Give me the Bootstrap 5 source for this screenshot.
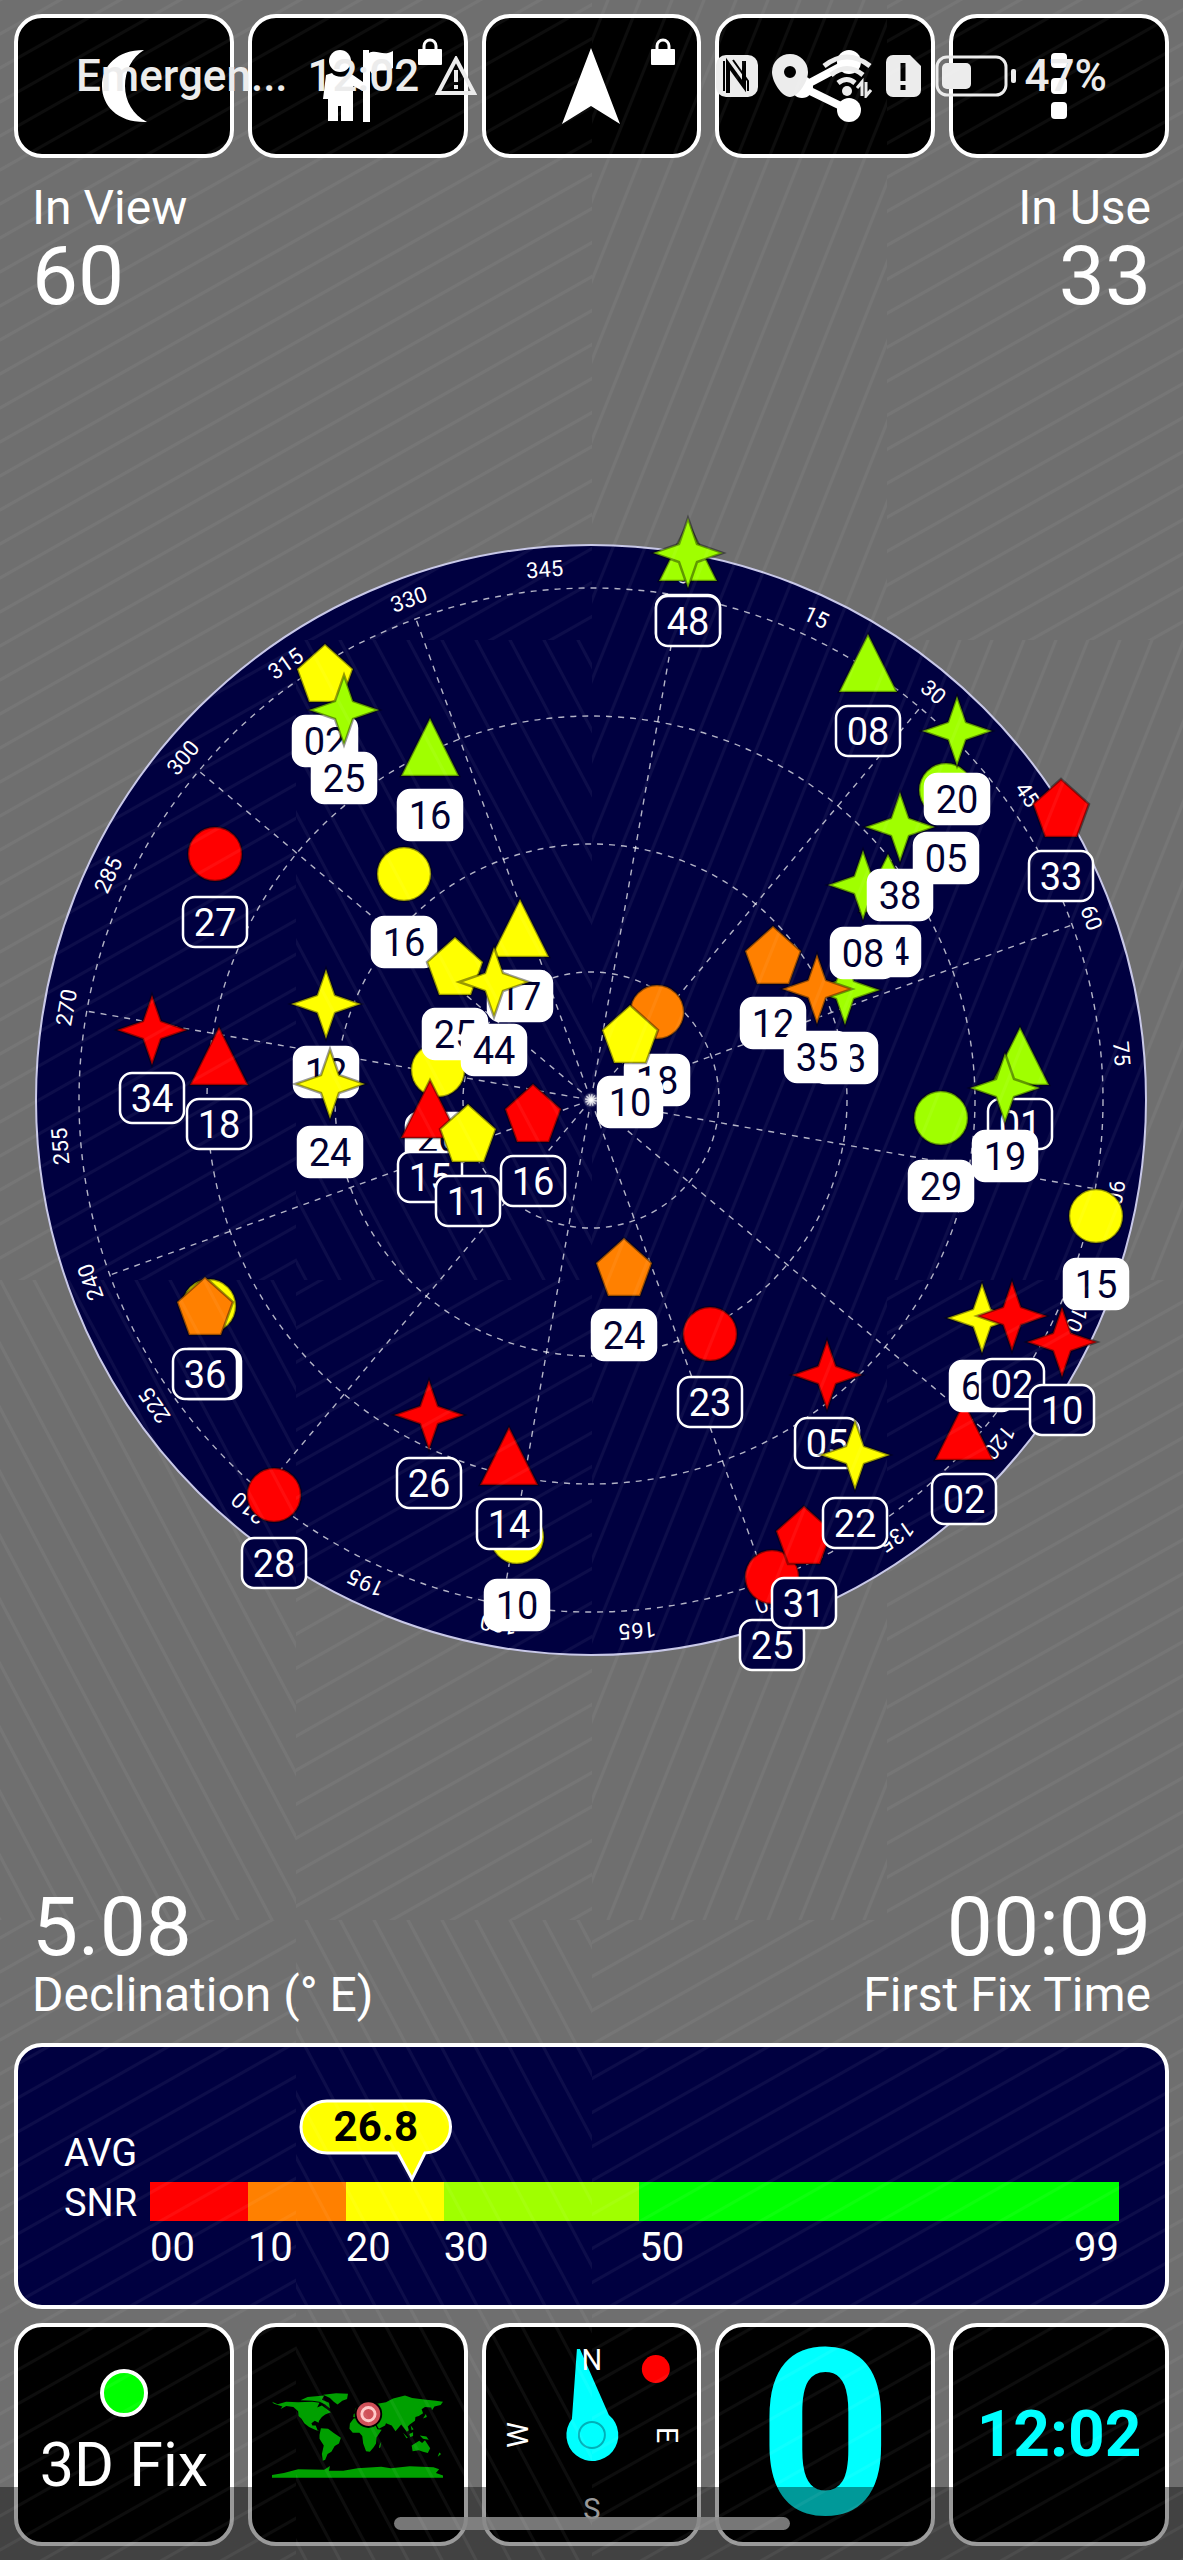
<!DOCTYPE html>
<html lang="en">
<head>
<meta charset="utf-8">
<meta name="viewport" content="width=device-width, initial-scale=1">
<title>GPS satellites</title>
<link href="https://cdn.jsdelivr.net/npm/bootstrap@5.3.0/dist/css/bootstrap.min.css" rel="stylesheet">
<style>
  body { background: #6f6f6f; color: #fff; font-family: Roboto, "Liberation Sans", sans-serif; }
  .screen { padding: 14px 0; overflow: hidden; }
  .tile-row { display: grid; grid-template-columns: repeat(5, minmax(0, 1fr)); gap: 14px; padding: 0 14px; }
  .tile { background: #000; border: 4px solid #fff; border-radius: 28px; color: #fff; padding: 0; position: relative; overflow: hidden; }
  .tile-top { height: 144px; }
  .tile-bottom { height: 223px; }
  .tile svg { display: block; }
  .tile .lock { position: absolute; top: 20px; right: 22px; }
  .status-bar { top: 50px; padding: 0 76px; color: #ececec; font-size: 44px; line-height: 52px; font-weight: 500; pointer-events: none; }
  .status-group { gap: 14px; }
  .status-clock { margin-left: 20px; }
  .readouts { padding: 0 32px; }
  .readouts-top { padding-top: 22px; }
  .readout-name { font-size: 48px; line-height: 56px; }
  .readout-value { font-size: 82px; line-height: 80px; }
  .radar { display: block; width: 100%; height: auto; }
  .radar text { font-size: 38px; text-anchor: middle; }
  .radar .bearing { font-size: 22px; fill: #fff; }
  .grid-line { fill: none; stroke: #fff; stroke-opacity: .7; stroke-width: 1.4; stroke-dasharray: 6 6; }
  .marker { stroke: #000; stroke-opacity: .4; stroke-width: 2.5; }
  .tag { stroke: #fff; stroke-width: 2.5; }
  .snr { margin: 20px 14px 14px; padding: 52px 46px 30px; background: #000040; border: 4px solid #fff; border-radius: 28px; }
  .snr-name { width: 86px; padding-top: 29px; font-size: 38px; line-height: 50px; }
  .snr-gauge { padding-top: 83px; }
  .snr-bar { height: 39px; }
  .snr-scale { font-size: 40px; line-height: 54px; }
  .span-10 { flex: 10 1 0; } .span-20 { flex: 20 1 0; } .span-49 { flex: 49 1 0; }
  .c-red { background: #f00; } .c-orange { background: #ff8000; } .c-yellow { background: #ff0; }
  .c-lime { background: #a0ff00; } .c-green { background: #0f0; }
  .bubble { top: 0; width: 153px; height: 83px; margin-left: -113px; color: #000; font-size: 42px; line-height: 56px; font-weight: 700; }
  .bubble svg { left: 0; top: 0; }
  .fix-dot { width: 48px; height: 48px; background: #0f0; border: 4px solid #fff; }
  .fix-text { font-size: 61px; line-height: 64px; }
  .speed { color: #0ff; font-size: 232px; line-height: 200px; font-weight: 700; }
  .clock { color: #0ff; font-size: 64px; line-height: 1; font-weight: 700; }
  .nav-shade { height: 73px; background: rgba(0,0,0,.4); }
  .nav-handle { width: 396px; height: 13px; border-radius: 7px; background: rgba(136,136,136,.88); }
  .texture { inset: 0; pointer-events: none; }
  .texture pattern path { fill: none; stroke: #fff; stroke-opacity: .05; stroke-width: 3; }
</style>
<script src="https://cdn.jsdelivr.net/npm/bootstrap@5.3.0/dist/js/bootstrap.bundle.min.js"></script>
</head>
<body>
<div class="screen position-relative">

  <header class="tile-row">
    <button type="button" class="tile tile-top d-flex align-items-center justify-content-center" aria-label="Night mode">
      <svg width="46" height="74" viewBox="0 0 46 74" fill="#fff"><path d="M43 1C16 1 1 17 1 37s16 37 45 36C32 66 24 52 24 37S31 8 43 1Z"/></svg>
    </button>
    <button type="button" class="tile tile-top d-flex align-items-center justify-content-center" aria-label="Waypoints">
      <svg width="70" height="74" viewBox="0 0 70 74" fill="#fff"><circle cx="17" cy="12" r="11"/><path d="M3 26l6-2c3 5 15 5 18 0l13 9v-32h6v3c8-4 14 4 24-2v17c-6 5-14 0-18 5-2 2-4 0-5-2v51h-7V42l-10-5v35H18V57h-3v15H5V50H0Z"/></svg>
      <svg class="lock" width="24" height="28" viewBox="0 0 24 28"><path d="M6 12V8a6 6 0 0 1 12 0v4" fill="none" stroke="#fff" stroke-width="3"/><rect y="11" width="24" height="16" rx="1" fill="#fff"/></svg>
    </button>
    <button type="button" class="tile tile-top d-flex align-items-center justify-content-center" aria-label="Navigate">
      <svg width="58" height="76" viewBox="0 0 58 76" fill="#fff"><path d="M29 0L58 76L29 58L0 76Z"/></svg>
      <svg class="lock" width="24" height="28" viewBox="0 0 24 28"><path d="M6 12V8a6 6 0 0 1 12 0v4" fill="none" stroke="#fff" stroke-width="3"/><rect y="11" width="24" height="16" rx="1" fill="#fff"/></svg>
    </button>
    <button type="button" class="tile tile-top d-flex align-items-center justify-content-center" aria-label="Share">
      <svg width="72" height="72" viewBox="0 0 72 72" fill="#fff"><path d="M60 12L13 37L60 60" fill="none" stroke="#fff" stroke-width="8"/><circle cx="60" cy="12" r="12"/><circle cx="60" cy="60" r="12"/><circle cx="13" cy="37" r="11"/></svg>
    </button>
    <button type="button" class="tile tile-top d-flex align-items-center justify-content-center" aria-label="More">
      <svg width="16" height="66" viewBox="0 0 16 66" fill="#fff"><rect width="16" height="15" rx="4"/><rect y="25" width="16" height="16" rx="4"/><rect y="49" width="16" height="17" rx="4"/></svg>
    </button>
  </header>

  <div class="status-bar position-absolute start-0 end-0 d-flex justify-content-between align-items-center">
    <div class="d-flex align-items-center">
      <span>Emergen...</span>
      <span class="status-clock">12:02</span>
      <svg class="ms-3" width="42" height="40" viewBox="0 0 42 40" fill="none" stroke="#ececec" stroke-width="4"><path d="M21 3L39 37H3Z"/><path d="M21 14v12M21 29v4"/></svg>
    </div>
    <div class="status-group d-flex align-items-center">
      <svg width="42" height="42" viewBox="0 0 42 42"><rect width="42" height="42" rx="10" fill="#ececec"/><path d="M12 38V9L28 31V6" fill="none" stroke="#000" stroke-width="4"/><path d="M17 5L32 26V36M8 6V36" fill="none" stroke="#000" stroke-width="2"/></svg>
      <svg width="36" height="44" viewBox="0 0 36 44"><path d="M18 0a18 18 0 0 1 18 18c0 10-10 25-18 25S0 28 0 18A18 18 0 0 1 18 0Zm0 12a6 6 0 1 0 0 12 6 6 0 0 0 0-12Z" fill="#ececec" fill-rule="evenodd"/></svg>
      <svg width="50" height="44" viewBox="0 0 50 44" fill="none" stroke="#ececec"><path d="M2 12Q25-6 48 12M9 21Q25 8 41 21M16 29Q25 22 33 29" stroke-width="5"/><circle cx="25" cy="37" r="5" fill="#ececec" stroke="none"/><path d="M40 42V28l-5 6M44 28v14l5-6" stroke-width="3"/></svg>
      <svg width="35" height="42" viewBox="0 0 35 42"><path d="M7 0H24L35 11V35a7 7 0 0 1-7 7H7a7 7 0 0 1-7-7V7a7 7 0 0 1 7-7Z" fill="#ececec"/><path d="M17 8v18M17 30v5" stroke="#000" stroke-width="5"/></svg>
      <div class="d-flex align-items-center gap-2">
        <svg width="82" height="42" viewBox="0 0 82 42"><rect x="2" y="2" width="69" height="38" rx="10" fill="none" stroke="#ececec" stroke-width="3"/><rect x="7" y="8" width="29" height="26" rx="5" fill="#ececec"/><rect x="76" y="14" width="5" height="14" rx="2" fill="#ececec"/></svg>
        <span>47%</span>
      </div>
    </div>
  </div>

  <main>
    <div class="readouts readouts-top d-flex justify-content-between">
      <div><div class="readout-name">In View</div><div class="readout-value">60</div></div>
      <div class="text-end"><div class="readout-name">In Use</div><div class="readout-value">33</div></div>
    </div>

    <svg class="radar" viewBox="0 316 1183 1571" role="img" aria-label="Sky view of satellites">
      <defs>
        <radialGradient id="glow"><stop offset="0" stop-color="#fff"/><stop offset="1" stop-color="#fff" stop-opacity="0"/></radialGradient>
        <circle id="circle" r="27"/>
        <path id="tri" d="M0-29L29 29H-29Z"/>
        <path id="pent" d="M0-29L28-4L16 29H-16L-28-4Z"/>
        <path id="star" d="M0-35L9-9L35 0L9 9L0 35L-9 9L-35 0L-9-9Z"/>
      </defs>
      <circle cx="591" cy="1100" r="555" fill="#000040" stroke="#c8c8e8" stroke-width="2"/>
      <g id="sky-grid"></g>
      <circle cx="591" cy="1100" r="8" fill="url(#glow)"/>
      <g id="satellites"></g>
    </svg>

    <div class="readouts d-flex justify-content-between">
      <div><div class="readout-value">5.08</div><div class="readout-name">Declination (° E)</div></div>
      <div class="text-end"><div class="readout-value">00:09</div><div class="readout-name">First Fix Time</div></div>
    </div>

    <section class="snr d-flex">
      <div class="snr-name flex-shrink-0">AVG<br>SNR</div>
      <div class="snr-gauge flex-grow-1 position-relative">
        <div class="bubble position-absolute text-center" style="left:27.07%">
          <svg class="position-absolute" width="153" height="83" viewBox="0 0 153 83"><path d="M28 2H125a26 26 0 0 1 1 52L113 80L99 54H28a26 26 0 0 1 0-52Z" fill="#ff0" stroke="#fff" stroke-width="3"/></svg>
          <span class="position-relative">26.8</span>
        </div>
        <div class="snr-bar d-flex">
          <div class="span-10 c-red"></div><div class="span-10 c-orange"></div><div class="span-10 c-yellow"></div><div class="span-20 c-lime"></div><div class="span-49 c-green"></div>
        </div>
        <div class="snr-scale d-flex">
          <div class="span-10">00</div><div class="span-10">10</div><div class="span-10">20</div><div class="span-20">30</div>
          <div class="span-49 d-flex justify-content-between"><span>50</span><span>99</span></div>
        </div>
      </div>
    </section>
  </main>

  <footer class="tile-row">
    <button type="button" class="tile tile-bottom">
      <span class="d-flex flex-column align-items-center justify-content-center h-100 gap-3 pb-1">
        <span class="fix-dot rounded-circle"></span>
        <span class="fix-text">3D Fix</span>
      </span>
    </button>
    <button type="button" class="tile tile-bottom d-flex align-items-center justify-content-center" aria-label="World map">
      <svg width="171" height="86" viewBox="0 0 360 180" fill="#00a000" overflow="visible">
        <path d="M0 20L12 25L30 20L55 21L85 20L100 22L95 32L105 28L115 35L124 42L112 47L105 52L99 60L98 64L90 60L83 65L85 70L92 70L96 80L101 82L93 80L78 73L68 65L62 56L56 50L55 40L45 31L30 29L18 35L22 30L4 24Z"/>
        <path d="M108 5L135 2L160 3L158 14L148 18L138 26L130 20L122 12ZM60 17L75 10L110 7L105 16L120 22L122 34L112 26L100 20L85 18Z"/>
        <path d="M103 76L118 77L130 86L145 96L141 108L132 113L125 125L117 130L112 142L107 144L105 130L109 112L100 98L100 90Z"/>
        <path d="M164 66L172 55L190 53L212 58L222 78L231 79L220 95L219 108L214 116L206 125L198 124L192 108L190 92L184 85L170 85L163 77Z"/>
        <path d="M171 52L172 46L180 42L188 37L190 32L185 30L195 22L208 19L222 24L240 21L255 13L280 7L295 12L320 15L345 18L360 20L355 27L342 30L337 38L335 32L322 31L315 36L318 44L309 50L302 52L301 60L290 68L286 72L288 80L284 83L279 77L272 68L260 82L252 70L240 65L238 70L225 77L215 60L216 54L206 53L203 49L196 50L190 46L183 48L178 53Z"/>
        <path d="M294 112L310 102L316 107L322 101L333 118L328 128L318 125L309 122L296 124ZM226 112L230 104L228 116L225 118ZM276 85L286 96L283 97ZM289 88L297 84L297 92L291 94ZM311 91L325 93L330 100L318 98ZM352 127L356 130L349 136ZM318 55L324 46L326 52ZM174 40L177 32L181 39ZM292 70L298 78L294 80Z"/>
        <path d="M0 174L25 170L55 162L110 163L122 155L120 165L150 165L180 160L230 157L250 160L290 156L340 158L352 162L345 170L360 175V180H0Z"/>
        <g><circle cx="203" cy="46" r="29" fill="#000"/><circle cx="203" cy="46" r="25" fill="#d05058"/><circle cx="203" cy="46" r="14" fill="none" stroke="#ffc8c8" stroke-width="6"/></g>
      </svg>
    </button>
    <button type="button" class="tile tile-bottom d-flex align-items-center justify-content-center" aria-label="Compass">
      <svg width="212" height="215" viewBox="0 0 212 215" fill="#fff" font-size="29" text-anchor="middle">
        <path d="M91 22H94L123 88A26 26 0 1 1 86 92Z" fill="#0ff"/>
        <circle cx="106" cy="108" r="13" fill="none" stroke="#00b0b8" stroke-width="2"/>
        <text x="106" y="43">N</text>
        <text x="106" y="192">S</text>
        <text transform="translate(42 108) rotate(-90)">W</text>
        <text transform="translate(171 108) rotate(90)">E</text>
        <circle cx="170" cy="42" r="14" fill="#f00"/>
      </svg>
    </button>
    <button type="button" class="tile tile-bottom d-flex align-items-center justify-content-center"><span class="speed">0</span></button>
    <button type="button" class="tile tile-bottom d-flex align-items-center justify-content-center"><span class="clock">12:02</span></button>
  </footer>

  <div class="nav-shade position-absolute start-0 end-0 bottom-0 d-flex align-items-center justify-content-center">
    <div class="nav-handle"></div>
  </div>

  <svg class="texture position-absolute w-100 h-100" viewBox="0 0 1183 2560" preserveAspectRatio="none" aria-hidden="true">
    <defs>
      <pattern id="gentle" width="60" height="34" patternUnits="userSpaceOnUse"><path d="M-60 68L120-34M-60 34L60-34M0 68L120 0"/></pattern>
      <pattern id="steep" width="32" height="80" patternUnits="userSpaceOnUse"><path d="M-32 160L64-80M-32 80L32-80M0 160L64 0"/></pattern>
      <pattern id="falling" width="34" height="64" patternUnits="userSpaceOnUse"><path d="M-34-64L68 128M0-64L68 64M-34 0L34 128"/></pattern>
    </defs>
    <path fill="url(#gentle)" d="M0 0H592V640H296V1280H0ZM887 0H1183V640H887ZM296 1280H592V1920H296ZM887 1280H1183V2560H592V1920H887ZM0 1920H296V2560H0Z"/>
    <path fill="url(#steep)" d="M592 0H887V640H1183V1280H887V1920H592Z"/>
    <path fill="url(#falling)" d="M296 640H592V1280H296ZM0 1280H296V1920H0ZM296 1920H592V2560H296Z"/>
  </svg>
</div>

<script>
  const CX = 591, CY = 1100, HEADING = 10;
  const point = (deg, r) => [CX + r * Math.sin(deg * Math.PI / 180), CY - r * Math.cos(deg * Math.PI / 180)];

  // Elevation rings, azimuth spokes and bearing names
  let grid = '';
  for (const r of [128, 256, 384, 512]) grid += `<circle class="grid-line" cx="${CX}" cy="${CY}" r="${r}"/>`;
  for (let a = 0; a < 360; a += 30) {
    const [x, y] = point(a + HEADING, 512);
    grid += `<line class="grid-line" x1="${CX}" y1="${CY}" x2="${x}" y2="${y}"/>`;
  }
  for (let a = 0; a < 360; a += 15) {
    const [x, y] = point(a + HEADING, 525);
    grid += `<text class="bearing" transform="translate(${x} ${y}) rotate(${a + HEADING})">${a}</text>`;
  }
  document.getElementById('sky-grid').innerHTML = grid;

  // [shape, signal, x, y, number, used in fix]
  const R = '#f00', O = '#ff8000', Y = '#ff0', G = '#a0ff00';
  const sats = [
    ['pent', Y, 325, 673, '02', 1], ['star', G, 344, 710, '25', 1], ['tri', G, 430, 747, '16', 1],
    ['circle', R, 215, 854, '27', 0], ['circle', Y, 404, 874, '16', 1],
    ['circle', Y, 438, 1070, '26', 1], ['tri', Y, 520, 928, '17', 1], ['pent', Y, 455, 966, '25', 1],
    ['star', Y, 494, 982, '44', 1], ['star', Y, 326, 1004, '12', 1], ['star', Y, 330, 1084, '24', 1],
    ['star', R, 152, 1030, '34', 0], ['tri', R, 219, 1056, '18', 0],
    ['tri', R, 430, 1109, '15', 0], ['pent', Y, 468, 1133, '11', 0], ['pent', R, 533, 1113, '16', 0],
    ['tri', G, 688, 552, '48', 0], ['star', G, 688, 553, '48', 0], ['tri', G, 868, 663, '08', 0],
    ['circle', G, 946, 790, '05', 1], ['star', G, 957, 731, '20', 1],
    ['star', G, 845, 990, '13', 1], ['tri', G, 888, 883, '04', 1], ['star', G, 863, 885, '08', 1],
    ['star', G, 900, 827, '38', 1],
    ['pent', O, 773, 955, '12', 1], ['star', O, 817, 989, '35', 1],
    ['circle', O, 657, 1012, '18', 1], ['pent', Y, 630, 1034, '10', 1],
    ['tri', G, 1020, 1056, '01', 0], ['circle', G, 941, 1118, '29', 1], ['star', G, 1005, 1088, '19', 1],
    ['pent', R, 1061, 808, '33', 0], ['pent', O, 624, 1267, '24', 1], ['circle', R, 710, 1334, '23', 0],
    ['circle', R, 772, 1577, '25', 0], ['pent', R, 804, 1535, '31', 0],
    ['star', R, 827, 1375, '05', 0], ['star', Y, 855, 1455, '22', 0],
    ['circle', Y, 1096, 1216, '15', 1], ['tri', R, 964, 1431, '02', 0],
    ['star', Y, 982, 1318, '60', 1], ['star', R, 1012, 1316, '02', 0], ['star', R, 1062, 1342, '10', 0],
    ['circle', Y, 209, 1306, '05', 1], ['pent', O, 205, 1306, '36', 0],
    ['star', R, 429, 1415, '26', 0], ['circle', Y, 517, 1537, '10', 1], ['tri', R, 509, 1456, '14', 0],
    ['circle', R, 274, 1495, '28', 0]
  ];
  document.getElementById('satellites').innerHTML = sats.map(([shape, color, x, y, id, used]) =>
    `<g transform="translate(${x} ${y})"><use href="#${shape}" class="marker" fill="${color}"/>` +
    `<rect class="tag" x="-32" y="43" width="64" height="50" rx="12" fill="${used ? '#fff' : '#000040'}"/>` +
    `<text y="82" fill="${used ? '#000030' : '#fff'}">${id}</text></g>`).join('');
</script>
</body>
</html>
